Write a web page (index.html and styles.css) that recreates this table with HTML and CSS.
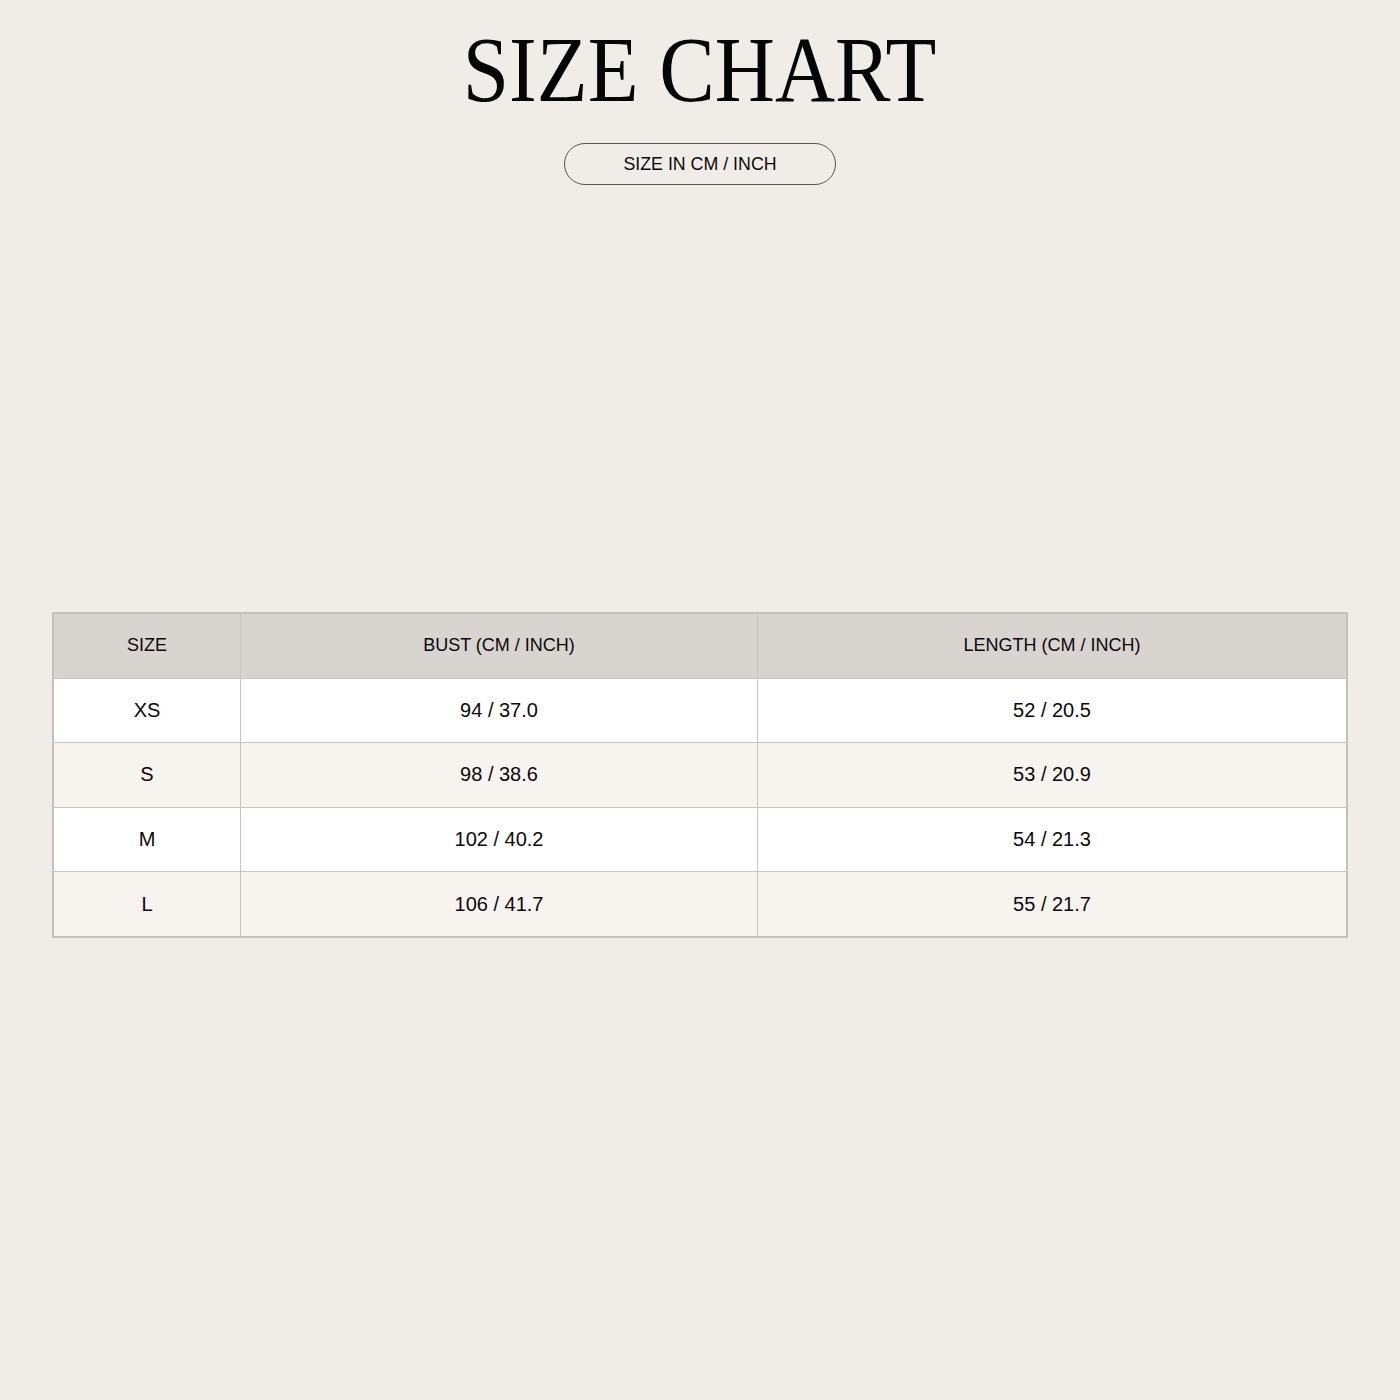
FILE: index.html
```html
<!DOCTYPE html>
<html>
<head>
<meta charset="utf-8">
<link rel="stylesheet" href="styles.css">
</head>
<body>
<div class="page">
  <header class="head">
    <h1 class="title">SIZE CHART</h1>
    <div class="pill">SIZE IN CM / INCH</div>
  </header>
  <table class="chart">
    <thead>
      <tr><th class="c1">SIZE</th><th class="c2">BUST (CM / INCH)</th><th class="c3">LENGTH (CM / INCH)</th></tr>
    </thead>
    <tbody>
      <tr><td>XS</td><td>94 / 37.0</td><td>52 / 20.5</td></tr>
      <tr><td>S</td><td>98 / 38.6</td><td>53 / 20.9</td></tr>
      <tr><td>M</td><td>102 / 40.2</td><td>54 / 21.3</td></tr>
      <tr><td>L</td><td>106 / 41.7</td><td>55 / 21.7</td></tr>
    </tbody>
  </table>
</div>
</body>
</html>
```
FILE: styles.css
```css
html, body {
  margin: 0;
  padding: 0;
  background: #f0ede8;
}
body {
  width: 1400px;
  height: 1400px;
  font-family: "Liberation Sans", Arial, sans-serif;
  color: #0a0a0a;
}
.page {
  padding: 0 52px;
}
.head {
  display: flex;
  flex-direction: column;
  align-items: center;
  padding-top: 15px;
}
.title {
  margin: 0;
  font-family: "Liberation Serif", "Times New Roman", serif;
  font-weight: 400;
  font-size: 93px;
  line-height: 110px;
  color: #050505;
  transform: scaleX(0.895);
  white-space: nowrap;
}
.pill {
  margin-top: 18px;
  width: 270px;
  height: 40px;
  border: 1px solid #555;
  border-radius: 21px;
  display: flex;
  align-items: center;
  justify-content: center;
  font-size: 17.8px;
  color: #0a0a0a;
}
.chart {
  margin-top: 427px;
  width: 1296px;
  border-collapse: collapse;
  border: 2px solid #c4c0bb;
  table-layout: fixed;
}
.chart th, .chart td {
  border: 1.5px solid #c8c4bf;
  height: 63.6px;
  padding: 0;
  text-align: center;
  font-weight: 400;
}
.chart th {
  background: #d8d4d0;
  font-size: 18px;
}
.chart td {
  font-size: 20px;
}
.c1 { width: 186px; }
.c2 { width: 516px; }
.chart tbody tr:nth-child(odd) td { background: #ffffff; }
.chart tbody tr:nth-child(even) td { background: #f7f4f0; }
```
